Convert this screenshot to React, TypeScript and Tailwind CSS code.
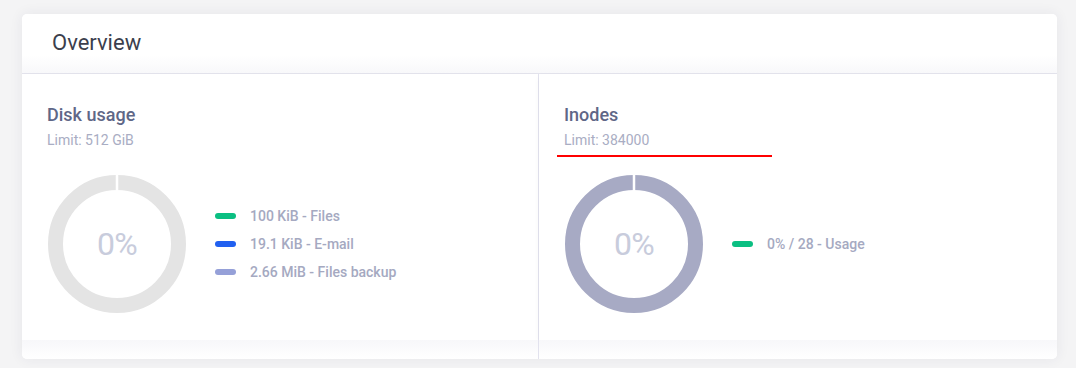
import React from 'react';

type LegendItem = { color: string; label: string };

const Donut: React.FC<{ color: string }> = ({ color }) => (
  <div className="relative w-[138px] h-[138px] shrink-0">
    <svg width="138" height="138" viewBox="0 0 138 138">
      <circle cx="69" cy="69" r="61.5" fill="none" stroke={color} strokeWidth="15" />
      <line x1="69" y1="0" x2="69" y2="18" stroke="#ffffff" strokeWidth="2.5" />
    </svg>
    <div className="absolute inset-0 flex items-center justify-center text-[32px] text-[#c8ccdc] tracking-tight">0%</div>
  </div>
);

const Legend: React.FC<{ items: LegendItem[] }> = ({ items }) => (
  <div className="flex flex-col gap-[10px]">
    {items.map((item) => (
      <div key={item.label} className="flex items-center h-[18px]">
        <span className={`block w-[21px] h-[6px] rounded-full ${item.color}`} />
        <span className="ml-[14px] text-[14px] font-medium text-[#a5a9c1]">{item.label}</span>
      </div>
    ))}
  </div>
);

const Panel: React.FC<{
  title: string;
  limit: string;
  donutColor: string;
  legend: LegendItem[];
  marked?: boolean;
  width: string;
}> = ({ title, limit, donutColor, legend, marked, width }) => (
  <div className={`${width} h-[266px] bg-white pl-[25px] pt-[30px] shadow-[0_3px_6px_rgba(0,0,0,0.04)]`}>
    <h3 className="text-[18px] leading-[22px] font-medium text-[#5f6787]">{title}</h3>
    <p className="mt-[6px] text-[14px] leading-[16px] text-[#a9adc3]">{limit}</p>
    {marked ? <div className="mt-[7px] -ml-[7px] w-[215px] h-[2px] bg-[#ff0000]" /> : <div className="mt-[7px] h-[2px]" />}
    <div className="mt-[18px] ml-[1px] flex items-center gap-[29px]">
      <Donut color={donutColor} />
      <Legend items={legend} />
    </div>
  </div>
);

const App: React.FC = () => {
  return (
    <div className="w-[1076px] h-[368px] bg-[#f4f4f5] pt-[14px] pl-[22px] font-['Roboto',sans-serif]">
      <div className="w-[1035px] h-[345px] bg-white rounded-[5px] overflow-hidden shadow-[0_0_14px_rgba(40,40,80,0.07)]">
        <div className="h-[60px] border-b border-[#e3e3ec] bg-gradient-to-b from-white from-70% to-[#f8f8fa] flex items-center pl-[30px]">
          <h2 className="text-[22px] text-[#3c3f4d] leading-none pb-[2px]">Overview</h2>
        </div>
        <div className="flex">
          <Panel
            title="Disk usage"
            limit="Limit: 512 GiB"
            donutColor="#e4e4e4"
            width="w-[516px]"
            legend={[
              { color: 'bg-[#0bbf82]', label: '100 KiB - Files' },
              { color: 'bg-[#2160f0]', label: '19.1 KiB - E-mail' },
              { color: 'bg-[#95a0d8]', label: '2.66 MiB - Files backup' },
            ]}
          />
          <div className="w-px bg-[#e2e2ee]" />
          <Panel
            title="Inodes"
            limit="Limit: 384000"
            donutColor="#a7aac4"
            width="flex-1"
            marked
            legend={[{ color: 'bg-[#0bbf82]', label: '0% / 28 - Usage' }]}
          />
        </div>
        <div className="flex h-[19px]">
          <div className="w-[516px] bg-gradient-to-b from-[#f7f7fa] to-white" />
          <div className="w-px bg-[#e2e2ee]" />
          <div className="flex-1 bg-gradient-to-b from-[#f7f7fa] to-white" />
        </div>
      </div>
    </div>
  );
};

export default App;
